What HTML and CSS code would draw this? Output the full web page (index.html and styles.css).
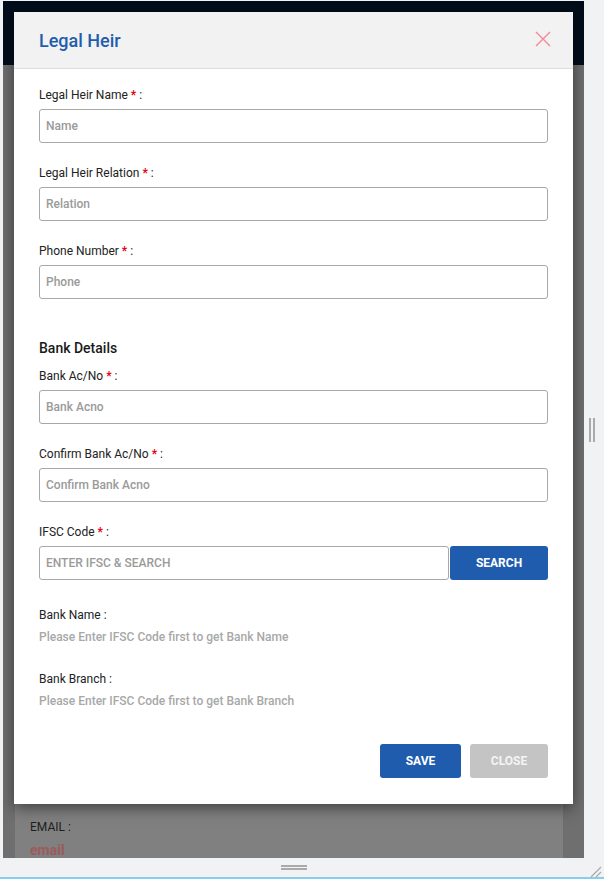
FILE: index.html
```html
<!DOCTYPE html>
<html>
<head>
<meta charset="utf-8">
<link rel="stylesheet" href="styles.css">
</head>
<body>
<div class="frame">
  <div class="viewport">
    <div class="page">
      <div class="topbar"></div>
      <div class="page-body">
        <div class="card">
          <div class="card-spacer"></div>
          <div class="card-label">EMAIL :</div>
          <div class="card-value">email</div>
        </div>
      </div>
    </div>
    <div class="modal">
      <div class="modal-header">
        <h2 class="modal-title">Legal Heir</h2>
        <svg class="close-icon" width="16" height="16" viewBox="0 0 16 16"><path d="M1 1L15 15M15 1L1 15" stroke="#f08b96" stroke-width="1.4" fill="none"/></svg>
      </div>
      <div class="modal-body">
        <div class="field">
          <label class="label">Legal Heir Name <span class="req">*</span> :</label>
          <input class="input" placeholder="Name">
        </div>
        <div class="field">
          <label class="label">Legal Heir Relation <span class="req">*</span> :</label>
          <input class="input" placeholder="Relation">
        </div>
        <div class="field">
          <label class="label">Phone Number <span class="req">*</span> :</label>
          <input class="input" placeholder="Phone">
        </div>
        <h3 class="section-title">Bank Details</h3>
        <div class="field">
          <label class="label">Bank Ac/No <span class="req">*</span> :</label>
          <input class="input" placeholder="Bank Acno">
        </div>
        <div class="field">
          <label class="label">Confirm Bank Ac/No <span class="req">*</span> :</label>
          <input class="input" placeholder="Confirm Bank Acno">
        </div>
        <div class="field">
          <label class="label">IFSC Code <span class="req">*</span> :</label>
          <div class="ifsc-row">
            <input class="input ifsc" placeholder="ENTER IFSC &amp; SEARCH">
            <button class="btn btn-blue search">SEARCH</button>
          </div>
        </div>
        <div class="info">
          <div class="label">Bank Name :</div>
          <div class="hint">Please Enter IFSC Code first to get Bank Name</div>
        </div>
        <div class="info">
          <div class="label">Bank Branch :</div>
          <div class="hint">Please Enter IFSC Code first to get Bank Branch</div>
        </div>
        <div class="actions">
          <button class="btn btn-blue save">SAVE</button>
          <button class="btn btn-grey close">CLOSE</button>
        </div>
      </div>
    </div>
  </div>
  <div class="vstrip"><span class="vhandle"></span></div>
  <div class="hstrip"><span class="hhandle"></span></div>
  <div class="corner">
    <svg width="21" height="21" viewBox="0 0 21 21"><path d="M8 19L18 9M13 19L18 14" stroke="#aaa" stroke-width="1.2"/></svg>
  </div>
</div>
<div class="blueline"></div>
</body>
</html>
```

FILE: styles.css
```css
* { box-sizing: border-box; }
html, body { margin: 0; padding: 0; }
body {
  width: 604px;
  height: 879px;
  background: #f1f2f4;
  font-family: Roboto, "Liberation Sans", sans-serif;
  overflow: hidden;
}
.frame {
  display: grid;
  grid-template-columns: 581px 20px;
  grid-template-rows: 857px 19px;
  padding: 1px 0 0 3px;
  height: 877px;
}
.viewport {
  position: relative;
  overflow: hidden;
  background: #6f6f6f;
}
.page { height: 100%; display: flex; flex-direction: column; }
.topbar { height: 68px; background: #020d1b; }
.page-body { flex: 1; padding: 0 21px 0 12px; background: #6f6f6f; }
.card {
  height: 100%;
  background: #808080;
  padding: 0 15px;
}
.card-spacer { height: 755px; }
.card-label { font-size: 12px; color: #1e1e1e; height: 22px; line-height: 14px; }
.card-value { font-size: 14px; font-weight: 700; color: #9c5a5a; line-height: 16px; }
.modal {
  position: absolute;
  left: 11px;
  top: 11px;
  width: 559px;
  height: 792px;
  background: #fff;
  box-shadow: 0 4px 14px rgba(0,0,0,0.5);
}
.modal-header {
  height: 57px;
  background: #f2f2f2;
  border-bottom: 1px solid #dddddd;
  display: flex;
  align-items: center;
  justify-content: space-between;
  padding: 0 22px 0 25px;
}
.modal-title {
  margin: 0;
  font-size: 18px;
  font-weight: 500;
  color: #1f5eae;
}
.close-icon { display: block; margin-top: -3px; }
.modal-body { padding: 19px 25px 0 25px; }
.field { margin-bottom: 23px; }
.label {
  display: block;
  font-size: 12px;
  color: #222;
  line-height: 14px;
  margin-bottom: 7px;
  height: 14px;
}
.req { color: #e0000f; font-weight: 700; }
.input {
  display: block;
  width: 100%;
  height: 34px;
  border: 1px solid #a8a8a8;
  border-radius: 3px;
  padding: 0 6px;
  font-family: Roboto, "Liberation Sans", sans-serif;
  font-size: 12px;
  font-weight: 500;
  outline: none;
}
.input::placeholder { color: #9a9a9a; }
.section-title {
  margin: 0 0 12px 0;
  padding-top: 17px;
  font-size: 14px;
  font-weight: 500;
  color: #1a1a1a;
  line-height: 18px;
}
.ifsc-row { display: flex; }
.ifsc-row .ifsc { flex: 1; }
.btn {
  border: none;
  border-radius: 3px;
  font-family: Roboto, "Liberation Sans", sans-serif;
  font-size: 12px;
  font-weight: 700;
  color: #fff;
  height: 34px;
  cursor: pointer;
}
.btn-blue { background: #1f5cae; }
.btn-grey { background: #c4c4c4; color: #f4f4f4; }
.search { width: 98px; margin-left: 1px; }
.info { margin-top: 28px; }
.info .label { margin-bottom: 8px; }
.hint { font-size: 12px; color: #a8a8a8; line-height: 14px; font-weight: 500; }
.actions {
  display: flex;
  justify-content: flex-end;
  gap: 9px;
  margin-top: 36px;
}
.save { width: 81px; }
.close { width: 78px; }
.vstrip {
  display: flex;
  align-items: center;
  justify-content: center;
  padding-right: 4px;
}
.vhandle {
  width: 6px;
  height: 24px;
  border-left: 2px solid #aaa;
  border-right: 2px solid #aaa;
}
.hstrip {
  display: flex;
  align-items: center;
  justify-content: center;
}
.hhandle {
  width: 26px;
  height: 5px;
  border-top: 2px solid #aaa;
  border-bottom: 2px solid #aaa;
}
.corner { position: relative; }
.corner svg { display: block; position: absolute; right: 0; bottom: -2px; }
.blueline { height: 2px; background: #86cdee; }
```
